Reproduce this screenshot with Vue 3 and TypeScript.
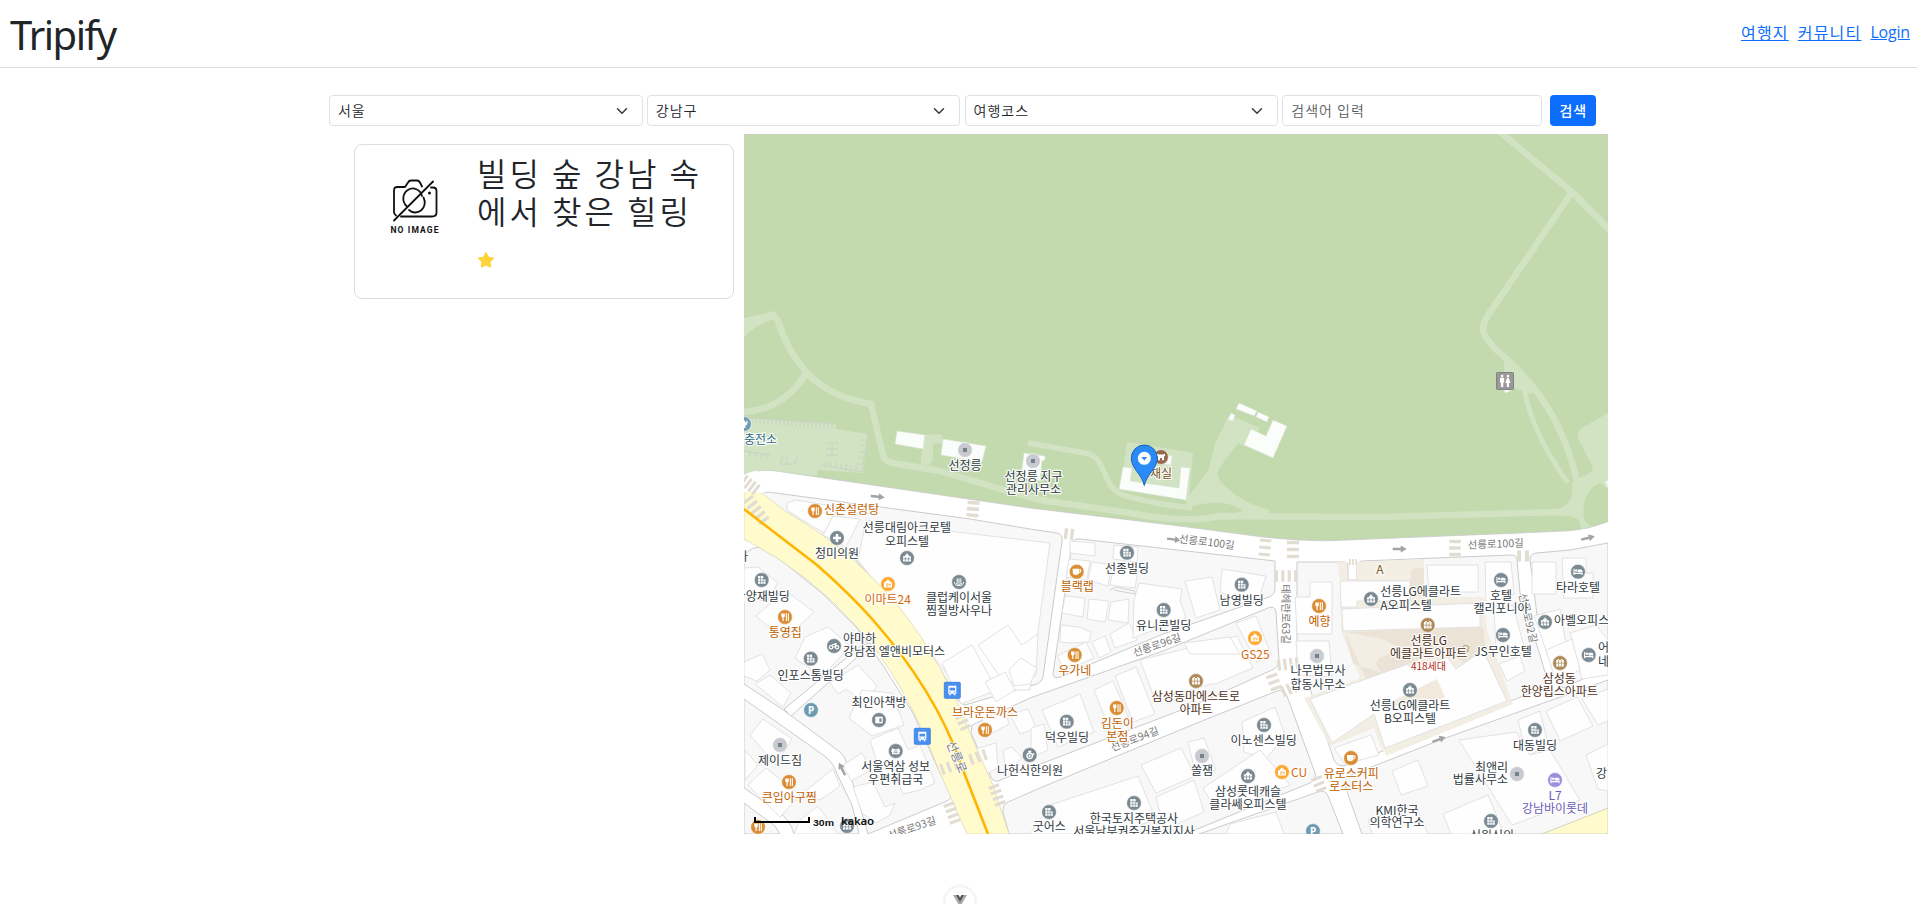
<script setup lang="ts">
import { ref } from 'vue'

type Kind =
  | 'building' | 'food' | 'cafe' | 'store' | 'apt' | 'office' | 'hotel' | 'stay'
  | 'dot' | 'parking' | 'plus' | 'spa' | 'bike' | 'book' | 'post' | 'clinic' | 'charge' | 'heritage'

interface Poi { k: Kind; x: number; y: number }
interface Label { t: string; x: number; y: number; c?: string; a?: 'start' | 'middle' | 'end' }
interface Walk { x: number; y: number; r: number; n: number; w: number; h: number; p: number }

const region = ref('서울')
const district = ref('강남구')
const category = ref('여행코스')
const keyword = ref('')

const iconFill: Record<Kind, string> = {
  building: '#7b8a92', food: '#db8d35', cafe: '#db8d35', store: '#fba834', apt: '#ae8a58', office: '#7b8a92',
  hotel: '#7b8a92', stay: '#9a8fdb', dot: '#c8cad0', parking: '#6f9bb1', plus: '#7b8a92', spa: '#7b8a92',
  bike: '#7b8a92', book: '#7b8a92', post: '#7b8a92', clinic: '#7b8a92', charge: '#6f9bb1', heritage: '#97694a',
}

const pois: Poi[] = [
  { k: 'charge', x: 744, y: 424 }, { k: 'dot', x: 965, y: 450 }, { k: 'dot', x: 1033, y: 461 },
  { k: 'heritage', x: 1161, y: 457 }, { k: 'food', x: 815, y: 511 }, { k: 'office', x: 907, y: 558 },
  { k: 'plus', x: 837, y: 538 }, { k: 'store', x: 888, y: 584 }, { k: 'spa', x: 959, y: 582 },
  { k: 'building', x: 761.7, y: 580 }, { k: 'food', x: 785, y: 617 }, { k: 'bike', x: 834, y: 646 },
  { k: 'building', x: 810.7, y: 658.7 }, { k: 'parking', x: 811, y: 710 }, { k: 'book', x: 879, y: 720 },
  { k: 'post', x: 895.7, y: 751 }, { k: 'food', x: 985, y: 730 }, { k: 'dot', x: 780, y: 745 },
  { k: 'food', x: 789, y: 782 }, { k: 'food', x: 758, y: 827 }, { k: 'office', x: 847, y: 826 },
  { k: 'clinic', x: 1029.7, y: 755 }, { k: 'cafe', x: 1076.7, y: 571.7 }, { k: 'building', x: 1127, y: 552.7 },
  { k: 'building', x: 1163.7, y: 610 }, { k: 'building', x: 1241.7, y: 584.7 }, { k: 'food', x: 1074.7, y: 655 },
  { k: 'store', x: 1255, y: 638 }, { k: 'food', x: 1319, y: 606 }, { k: 'dot', x: 1317, y: 656 },
  { k: 'office', x: 1371, y: 599 }, { k: 'apt', x: 1427.7, y: 625 }, { k: 'hotel', x: 1501, y: 580 },
  { k: 'hotel', x: 1503, y: 635 }, { k: 'hotel', x: 1578, y: 571.7 }, { k: 'office', x: 1545, y: 622 },
  { k: 'hotel', x: 1588.7, y: 655 }, { k: 'apt', x: 1560, y: 663 }, { k: 'apt', x: 1196, y: 681 },
  { k: 'food', x: 1116.7, y: 708 }, { k: 'building', x: 1066.7, y: 721.7 }, { k: 'building', x: 1264, y: 725 },
  { k: 'dot', x: 1202, y: 756 }, { k: 'store', x: 1282, y: 772 }, { k: 'office', x: 1248, y: 776 },
  { k: 'building', x: 1134, y: 803 }, { k: 'building', x: 1049, y: 812 }, { k: 'parking', x: 1313, y: 831 },
  { k: 'office', x: 1410, y: 690 }, { k: 'building', x: 1535, y: 730 }, { k: 'cafe', x: 1351, y: 758 },
  { k: 'dot', x: 1517, y: 774 }, { k: 'stay', x: 1555, y: 780 }, { k: 'building', x: 1491, y: 821 },
]

const labels: Label[] = [
  { t: '충전소', x: 744, y: 440, a: 'start', c: 'teal' },
  { t: '선정릉', x: 965, y: 465.7 },
  { t: '선정릉 지구', x: 1033.5, y: 477 }, { t: '관리사무소', x: 1033.5, y: 490 },
  { t: '재실', x: 1161, y: 473.5, c: 'bronze' },
  { t: '신촌설렁탕', x: 824, y: 510, a: 'start', c: 'orange' },
  { t: '선릉대림아크로텔', x: 907, y: 528 }, { t: '오피스텔', x: 907, y: 541.7 },
  { t: '청미의원', x: 837, y: 554 },
  { t: '이마트24', x: 887.7, y: 600, c: 'tangerine' },
  { t: '클럽케이서울', x: 959, y: 598 }, { t: '찜질방사우나', x: 959, y: 611 },
  { t: '사', x: 748, y: 557, a: 'end' },
  { t: '한양재빌딩', x: 789.8, y: 596.3, a: 'end' },
  { t: '통영집', x: 785.3, y: 633, c: 'orange' },
  { t: '야마하', x: 843, y: 639, a: 'start' }, { t: '강남점 엘앤비모터스', x: 843, y: 652, a: 'start' },
  { t: '인포스톰빌딩', x: 810.7, y: 675.3 },
  { t: '최인아책방', x: 879, y: 703 },
  { t: '서울역삼 성보', x: 895.7, y: 767 }, { t: '우편취급국', x: 895.7, y: 780 },
  { t: '브라운돈까스', x: 985, y: 712.7, c: 'orange' },
  { t: '제이드짐', x: 780, y: 761 },
  { t: '큰입아구찜', x: 789.3, y: 798, c: 'orange' },
  { t: '나헌식한의원', x: 1030, y: 771 },
  { t: '블랙랩', x: 1077.3, y: 587, c: 'orange' },
  { t: '선종빌딩', x: 1127, y: 569 },
  { t: '유니콘빌딩', x: 1163.7, y: 626 },
  { t: '남영빌딩', x: 1241.7, y: 601 },
  { t: '우가네', x: 1074.7, y: 671, c: 'orange' },
  { t: 'GS25', x: 1255.3, y: 654.7, c: 'tangerine' },
  { t: '예향', x: 1319.5, y: 622, c: 'orange' },
  { t: '나무법무사', x: 1318, y: 671 }, { t: '합동사무소', x: 1318, y: 684.5 },
  { t: 'A', x: 1380, y: 569.7, c: 'bronze' },
  { t: '선릉LG에클라트', x: 1380.3, y: 592, a: 'start' }, { t: 'A오피스텔', x: 1380.3, y: 605.3, a: 'start' },
  { t: '선릉LG', x: 1428.7, y: 641, c: 'brown' }, { t: '에클라트아파트', x: 1428.7, y: 653.7, c: 'brown' },
  { t: '418세대', x: 1428.5, y: 665.3, c: 'red' },
  { t: '호텔', x: 1501, y: 596 }, { t: '캘리포니아', x: 1501, y: 609 },
  { t: 'JS무인호텔', x: 1503, y: 651.3 },
  { t: '타라호텔', x: 1578, y: 587.3 },
  { t: '아벨오피스텔', x: 1554, y: 620.7, a: 'start' },
  { t: '어반', x: 1598, y: 647.7, a: 'start' }, { t: '네스', x: 1598, y: 661.7, a: 'start' },
  { t: '삼성동', x: 1559.3, y: 679, c: 'brown' }, { t: '한양립스아파트', x: 1559.3, y: 692, c: 'brown' },
  { t: '삼성동마에스트로', x: 1196, y: 696.7, c: 'brown' }, { t: '아파트', x: 1196, y: 709.7, c: 'brown' },
  { t: '덕우빌딩', x: 1067, y: 738 },
  { t: '이노센스빌딩', x: 1263.7, y: 741 },
  { t: '쏠잼', x: 1202, y: 771 },
  { t: 'CU', x: 1291, y: 772.3, a: 'start', c: 'tangerine' },
  { t: '삼성롯데캐슬', x: 1248, y: 792 }, { t: '클라쎄오피스텔', x: 1248, y: 805 },
  { t: '한국토지주택공사', x: 1134, y: 819 }, { t: '서울남부권주거복지지사', x: 1134, y: 832 },
  { t: '굿어스', x: 1049.3, y: 827 },
  { t: '선릉LG에클라트', x: 1410, y: 706 }, { t: 'B오피스텔', x: 1410, y: 719 },
  { t: '대동빌딩', x: 1535, y: 746 },
  { t: '유로스커피', x: 1351.3, y: 774, c: 'orange' }, { t: '로스터스', x: 1351.3, y: 787, c: 'orange' },
  { t: '최앤리', x: 1508, y: 767.3, a: 'end' }, { t: '법률사무소', x: 1508, y: 780, a: 'end' },
  { t: 'L7', x: 1555, y: 795.3, c: 'purple' }, { t: '강남바이롯데', x: 1555, y: 809, c: 'purple' },
  { t: 'KMI한국', x: 1397, y: 810.3 }, { t: '의학연구소', x: 1397, y: 822.3 },
  { t: '신원신의', x: 1492, y: 836 },
  { t: '강남', x: 1596, y: 774, a: 'start' },
]

const roadNames = [
  { t: '선릉로100길', x: 1206.7, y: 542, r: 7 }, { t: '선릉로100길', x: 1495.7, y: 544, r: -2 },
  { t: '선릉로96길', x: 1157, y: 645, r: -19 }, { t: '선릉로94길', x: 1134.7, y: 739, r: -21 },
  { t: '테헤란로63길', x: 1286, y: 614, r: 90 }, { t: '선릉로92길', x: 1528, y: 618, r: 77 },
  { t: '선릉로93길', x: 912, y: 828, r: -19 },
]

const frontNames: Label[] = [
  { t: '김돈이', x: 1117.3, y: 724, c: 'orange' }, { t: '본점', x: 1117.3, y: 737, c: 'orange' },
]

const arrows = [
  { x: 877.7, y: 496.7, r: 6 }, { x: 1174, y: 539.5, r: 7 }, { x: 1399.7, y: 549, r: 0 },
  { x: 1588, y: 538, r: -14 }, { x: 1439, y: 739.5, r: -20 }, { x: 842, y: 769, r: -117 },
]

const walks: Walk[] = [
  { x: 973, y: 509, r: 5, n: 3, w: 12, h: 3.4, p: 6.3 },
  { x: 1069, y: 534, r: 97, n: 2, w: 11, h: 3.4, p: 6 },
  { x: 1265, y: 547.5, r: 5, n: 3, w: 11.5, h: 3.2, p: 7 },
  { x: 1293, y: 549.5, r: 0, n: 3, w: 12, h: 3.4, p: 7 },
  { x: 1286, y: 576, r: 90, n: 4, w: 11.5, h: 3.2, p: 6.4 },
  { x: 1288, y: 664, r: 83, n: 4, w: 11, h: 3.2, p: 6 },
  { x: 1274, y: 682, r: -20, n: 3, w: 11.5, h: 3.2, p: 6.5 },
  { x: 1289, y: 689, r: 65, n: 3, w: 11, h: 3.2, p: 6 },
  { x: 1319, y: 784, r: -22, n: 3, w: 11, h: 3, p: 6 },
  { x: 1353, y: 562, r: 90, n: 3, w: 6, h: 1.8, p: 3.2 },
  { x: 1455, y: 548, r: 0, n: 3, w: 11.5, h: 3.4, p: 6.5 },
  { x: 1523, y: 556, r: 90, n: 2, w: 11, h: 4, p: 8 },
  { x: 963, y: 722, r: -25, n: 3, w: 11, h: 3.2, p: 6 },
  { x: 997, y: 795, r: -20, n: 4, w: 11, h: 3.2, p: 6 },
  { x: 952, y: 813, r: -20, n: 4, w: 11, h: 3.2, p: 6 },
  { x: 750, y: 485, r: -52, n: 4, w: 12, h: 3, p: 5 },
  { x: 756, y: 510, r: -37, n: 5, w: 12, h: 3.4, p: 6.5 },
  { x: 949, y: 767, r: 70, n: 3, w: 11, h: 3.2, p: 7 },
  { x: 978, y: 757, r: 70, n: 3, w: 11, h: 3.2, p: 7 },
]

const blocks = [
  'M757 493Q770 491 783 494L970 519L1030 529L1057 533Q1063 534 1062 541L1043 677Q1042 682 1037 684L965 705Q958 704 953 691L937 664L900 610L853 557L785 512Z',
  'M744 556Q752 545 762 548L782 561L823 594L857 628L884 667L913 713L940 773L951 792Q953 798 947 801L868 834L858 800L847 765Q845 756 840 752L782 709L744 684Z',
  'M744 699L826 757Q834 764 837 774L852 805L859 834H794Q790 820 779 812L744 788Z',
  'M744 803L775 826L780 834H744Z',
  'M972 725L1030 698L1163 651L1268 608Q1275 605 1276 612L1279 660Q1279 667 1272 670L1197 704L1030 768L998 781Q992 782 990 775L971 733Z',
  'M1008 802L1040 788L1197 723L1277 691Q1284 689 1287 696L1315 773Q1317 779 1310 783L1185 834H1009L1003 812Q1002 805 1008 802Z',
  'M1199 834L1318 792Q1325 789 1328 796L1343 834Z',
  'M1080 539Q1073 538 1072 544L1053 674Q1053 679 1060 677L1163 634L1269 597Q1275 595 1275 588V561Z',
  'M1297 562H1345Q1348 562 1348 566V580H1357V566Q1357 562 1362 561L1511 555Q1517 555 1517 560L1520 593L1540 655L1549 686L1347 765Q1338 768 1334 760L1297 650Z',
  'M1530 560Q1530 553 1537 553L1570 550L1608 543V667L1566 687Q1561 689 1559 683L1537 615Z',
  'M1346 777L1440 740L1608 680V834H1362L1345 786Z',
]

const beige = [
  'M1337 562H1347V580H1357V562L1424 559V597L1484 597L1488 640L1513 704L1386 756L1375 722L1397 690L1361 681L1341 631L1340 580Z',
  'M1304 698L1358 679L1488 633L1512 703L1383 752L1374 728L1330 746Z',
]
const tan = ['M1411 574Q1411 567 1420 568H1424V596H1409Z', 'M1345 632L1353 664L1404 679L1368 683Z', 'M1381 672Q1370 660 1385 656L1400 648L1382 639L1345 632L1483 627L1486 652L1468 664L1440 650L1392 671Z', 'M1387 704L1437 679L1445 697L1415 709Z']

const buildings = [
  // northwest block
  'M787 510V503L796 500L838 507L824 533L801 519Z', 'M833 516L860 519L846 547L823 535Z', 'M866 520L905 526L1050 543L1030 690L960 690L905 620L858 560Z',
  'M942 663L972 645L997 690L961 704Z', 'M978 645L1008 625L1022 645L1038 634L1036 675L1005 684Z',
  'M1009 670L1021 658L1037 668L1030 684L1014 686Z',
  // west
  'M744 568L758 567L778 583L766 602L744 594Z', 'M756 616L785 590L814 612L784 640Z', 'M805 637L828 627L850 646L822 677L795 658Z',
  'M755 684L770 675L791 693L783 707Z', 'M744 676V662L762 654L770 670L757 681Z', 'M858 665L877 686L866 704L846 689L838 694L830 683Z',
  'M862 690L892 693L904 725L872 736L849 718Z', 'M870 740L898 728L908 750L920 745L935 783L920 790L903 794L897 780L884 785Z',
  'M843 765L862 753L871 770L851 781Z', 'M853 787L873 782L885 807L895 803L890 815L876 823L862 813Z',
  'M750 735L763 719L792 739L776 765Z', 'M745 750L758 765L745 780Z', 'M748 785L766 768L800 795L780 817Z', 'M803 793L833 769L840 786L820 800Z', 'M800 820L818 806L838 834H794Z',
  // between the narrow streets
  'M1070 541L1095 543V556L1070 553Z', 'M1114 545L1138 547L1137 562L1113 559Z', 'M1069 559L1090 561L1087 580L1066 577Z', 'M1092 562L1112 565L1108 586L1088 580Z', 'M1114 567L1138 570L1135 588L1110 585Z',
  'M1065 596L1085 598L1083 617L1062 613Z', 'M1089 599L1109 601L1105 622L1087 619Z', 'M1111 602L1129 599L1128 623L1108 620Z', 'M1061 625L1079 627L1091 632L1089 642L1070 643L1060 642Z',
  'M1057 656L1086 642L1094 658L1065 671Z', 'M1092 642L1105 636L1111 652L1099 658Z', 'M1110 634L1129 623L1137 640L1115 648Z',
  'M1139 583L1182 589L1180 600L1186 618L1133 638L1134 600Z', 'M1185 581L1212 577L1220 610L1196 618Z', 'M1222 569L1266 576L1260 595L1246 605L1220 592Z',
  // middle band
  'M1094 690L1113 681L1131 723L1110 730Z', 'M1115 676L1136 667L1155 714L1133 722Z', 'M1140 660L1237 636L1253 668L1215 684L1211 684L1155 700Z',
  'M1184 643L1230 637L1240 654L1190 654Z', 'M1042 710L1080 694L1094 732L1058 747Z', 'M985 682L1005 672L1015 690L996 702Z',
  'M1236 623L1256 616L1271 655L1257 662Z', 'M982 719L1005 710L1009 724L989 735Z', 'M1010 714L1028 709L1036 728L1020 734Z', 'M975 749L996 743L998 768L986 774Z', 'M1003 750L1012 747L1022 758L1006 772Z',
  'M1031 728L1044 724L1048 750L1031 758Z',
  // below the middle band
  'M1141 765L1181 748L1195 776L1156 793Z', 'M1188 742L1204 738L1216 770L1195 771Z', 'M1156 797L1194 780L1204 812L1164 830Z', 'M1050 805L1138 776L1156 820L1110 834H1030Z',
  'M1242 722L1275 707L1285 735L1266 759L1244 752Z', 'M1203 788L1260 750L1290 785L1250 800L1216 810Z', 'M1230 824L1276 812L1284 834H1226Z',
  // east
  'M1295 597L1310 597V582H1332V634H1297Z', 'M1296 641L1329 641L1332 677L1298 675Z', 'M1427 565H1478V592H1429Z', 'M1485 562H1511L1514 594L1486 604Z',
  'M1340 581H1410V601H1357V607H1341Z', 'M1342 609L1480 603V627L1343 631Z', 'M1494 608L1513 605L1526 654L1496 650Z', 'M1499 664L1520 656L1525 671L1507 681Z',
  'M1310 699L1408 664L1413 671L1447 657L1456 669L1483 650L1507 701L1385 748L1374 714L1332 743Z', 'M1334 748L1371 735L1379 755L1345 764Z', 'M1532 562H1556V594H1532Z', 'M1562 558H1586V573H1593V598H1564Z',
  'M1534 616L1560 609L1567 650L1548 656Z', 'M1570 633L1596 625L1608 640V675L1582 679Z', 'M1546 650L1572 639L1580 670L1556 682Z', 'M1518 720L1540 711L1548 744L1527 757Z', 'M1546 711L1577 697L1593 726L1560 741Z',
  'M1582 699L1608 689V721L1598 725Z', 'M1586 755L1608 744V791L1598 789Z', 'M1459 740L1516 732L1530 755L1550 750L1580 800L1512 825Z', 'M1392 771L1418 760L1428 786L1401 795Z', 'M1368 820L1415 804L1428 834H1372Z', 'M1443 814L1488 795L1504 834H1451Z',
]
</script>

<template>
  <div class="page">
    <header class="topbar">
      <h1 class="brand">Tripify</h1>
      <nav class="links">
        <a href="#" class="ko">여행지</a>
        <a href="#" class="ko">커뮤니티</a>
        <a href="#" class="en">Login</a>
      </nav>
    </header>

    <main class="content">
      <form class="filters" @submit.prevent>
        <div v-for="(v, i) in [region, district, category]" :key="i" class="select ko">
          <span>{{ v }}</span>
          <svg viewBox="0 0 16 16" width="12" height="12"><path d="m2 5 6 6 6-6" fill="none" stroke="#343a40" stroke-width="2" stroke-linecap="round" stroke-linejoin="round" /></svg>
        </div>
        <input v-model="keyword" class="search ko" placeholder="검색어 입력" />
        <button class="submit ko">검색</button>
      </form>

      <div class="columns">
        <aside class="list">
          <article class="card">
            <svg class="thumb" viewBox="0 0 50 56" width="50" height="56">
              <g fill="none" stroke="#111" stroke-width="1.800" stroke-linecap="round" stroke-linejoin="round">
                <path d="M33 7.5 L31 3.5 Q30 1.5 28 1.5 H22 Q20 1.5 19 3.5 L16 8 H8.500 Q5 8 5 11.500 V33 Q5 35 7 36.500 M12 37.500 H43 Q47.500 37.500 47.500 33.500 V12 Q47.500 8.500 44 8.500 H42" />
                <path d="M33 17 A9.500 10 0 1 0 17.500 27 M20 31 A9.500 10 0 0 0 34.500 18.500" />
                <path d="M5 41.500 L44 2.500" />
              </g>
              <circle cx="40.500" cy="14" r="1.500" fill="#111" />
              <text x="1.500" y="54" textLength="48" class="noimg">NO IMAGE</text>
            </svg>
            <div class="info">
              <h2 class="title">빌딩 숲 강남 속<br />에서 찾은 힐링</h2>
              <svg class="star" viewBox="0 0 16 16" width="16" height="16"><path d="M8 .8 10.300 5.300 15.300 6.200 11.900 9.900 12.500 14.900 8 12.800 3.500 14.900 4.100 9.900 .7 6.200 5.700 5.300Z" fill="#fdd43a" stroke="#fdd43a" stroke-width="1.400" stroke-linejoin="round" /></svg>
            </div>
          </article>
        </aside>

        <svg class="map" viewBox="744 134 864 700" width="864" height="700">
          <rect x="744" y="134" width="864" height="700" fill="#fff" />

          <!-- park -->
          <path d="M744 134H1608V521.700Q1590 529 1570 530.700L1520 533L1420 537L1330 540.700Q1300 541 1263 537L1180 526L1030 508L783 472Q765 469 757 471L744 475Z" fill="#c3daaf" stroke="#c9c9c9" stroke-width=".8" />
          <g fill="none" stroke="#d1e3c3" stroke-width="6.500" stroke-linejoin="round">
            <path d="M777 318Q787 351 807 373Q829 397 871 404L883 455Q884 461 892 463L940 471L1000 489L1040 500L1130 513Q1185 524 1220 516Q1300 517 1380 517L1562 512" />
            <path d="M744 412Q785 409 806 373" />
            <path d="M1028 443L1085 453C1110 457 1098 491 1130 497Q1160 505 1192 508" stroke-width="5.500" />
            <path d="M925 465L928 439H942M928 462L929 441" stroke-width="9" />
            <path d="M1499 131L1572 192L1612 232" />
            <path d="M1572 192L1493 308C1477 329 1480 335 1503 356Q1530 379 1548 408Q1570 446 1577 482" />
            <path d="M1524 386Q1530 430 1568 483" stroke-width="5" />
          </g>
          <g fill="#d1e3c3">
            <path d="M744 318L775 311L779 318Q758 323 744 337Z" />
            <path d="M744 418L836 423V429L868 434L863 473L818 470L817 476L783 472Q765 469 757 471L744 475Z" />
            <path d="M1127 442L1193 453L1189 500L1120 490Z" />
            <path d="M1229 415L1260 428L1247 447L1238 443L1220 467Q1212 478 1232 492Q1248 505 1270 510L1265 518L1205 520L1243 511Q1225 497 1190 507L1185 501L1208 471L1215 444Z" />
            <path d="M1504 356L1538 389L1531 394L1522 391Q1507 387 1504 374Z" />
            <path d="M1608 413L1582 428Q1575 433 1579 440L1592 465Q1595 472 1585 475L1572 482Q1575 506 1556 509L1558 516Q1572 515 1579 520L1581 529L1592 527Q1577 493 1600 483L1608 489Z" />
          </g>
          <path d="M1608 489Q1580 484 1584 520L1590 526L1608 518Z" fill="#c3daaf" />
          <g stroke="#c5cec0" stroke-width=".8" fill="none">
            <path d="M744 417L836 424M748 418V423M752 418V423M756 418V423M760 419V424M764 419V424M768 419V424M772 420V425M776 420V425M780 420V425M784 421V426M788 421V426M792 421V426M796 422V427M800 422V427M804 422V427M808 423V428M812 423V428M816 423V428M820 424V429M824 424V429M828 424V429M832 424V429" />
            <path d="M868 434L862 472L820 465M866 440H861M865 446H860M864 452H859M864 458H858M863 464H857M826 461V466M831 462V467M836 462V468M841 463V469M846 464V470M851 465V471M856 466V472M826 443H838M826 449H838M826 455H838M832 443V455" />
            <path d="M744 451L770 455M750 452L749 457M756 453L755 458M762 454L761 459M768 454L767 459M783 456L780 464H795L797 457M788 457L786 464" />
          </g>
          <g fill="#fbfdfb" stroke="#d9e2d2" stroke-width=".6">
            <path d="M897 431L925 435L923 449L895 444Z" /><path d="M943 439L986 446L982 462L941 455Z" />
            <path d="M1024 453L1045 456V460L1042 461L1040 481L1021 477Z" />
            <path d="M1123 467L1132 468L1130 481L1179 488L1181 467L1190 468L1186 500L1119 489Z" /><path d="M1153 453L1172 456L1171 465L1152 463Z" />
            <path d="M1239 403L1257 411L1254 416L1236 409Z" /><path d="M1258 412L1269 417L1267 422L1256 417Z" /><path d="M1231 413L1235 415L1233 421L1228 420Z" />
            <path d="M1273 420L1287 426L1273 458L1244 445L1251 429L1266 436Z" /><path d="M1503 390L1512 390L1506 393Z" /><path d="M1605 482L1608 480V488Z" />
          </g>

          <!-- blocks, apartment grounds and buildings -->
          <g fill="#f8f8f9" stroke="#cbcbcb" stroke-width="1"><path v-for="(d, i) in blocks" :key="i" :d="d" /></g>
          <g fill="#f3eee3"><path v-for="(d, i) in beige" :key="i" :d="d" /></g>
          <g fill="#ebe3d6"><path v-for="(d, i) in tan.slice(0, 3)" :key="i" :d="d" /></g>
          <g fill="#fefefe" stroke="#dfdfe0" stroke-width=".9"><path v-for="(d, i) in buildings" :key="i" :d="d" /></g>
          <path :d="tan[3]" fill="#f0e9dc" />
          <path d="M784 709L862 645L873 643L791 716Z" fill="#fff" stroke="#cbcbcb" />
          <path d="M1110 590L1116 587L1135 591V594L1114 590" fill="none" stroke="#d0d0d0" />

          <!-- main avenue -->
          <path d="M744 488L762 493L785 511Q850 548 900 608Q945 665 973 740L992 783L1009 834H967L940 773Q905 680 857 627Q810 573 744 539Z" fill="#fffbcd" stroke="#ddd9bb" stroke-width=".8" />
          <path d="M744 475Q752 471 757 471L765 493L744 492Z" fill="#fff" />
          <path d="M1542 834L1608 808V834Z" fill="#fffbcd" stroke="#d5d2bb" />
          <g v-for="(c, i) in walks" :key="'w' + i" :transform="`translate(${c.x} ${c.y}) rotate(${c.r})`" fill="#e2ddd3">
            <rect v-for="n in c.n" :key="n" :x="-c.w / 2" :y="(n - (c.n + 1) / 2) * c.p - c.h / 2" :width="c.w" :height="c.h" />
          </g>
          <path d="M744 509L817 565Q850 594 873 620Q938 694 963 770L988 834" fill="none" stroke="#ffb400" stroke-width="2.600" />

          <g v-for="(a, i) in arrows" :key="'a' + i" :transform="`translate(${a.x} ${a.y}) rotate(${a.r})`"><path d="M-7 -1.200H1V-3.500L7 0L1 3.500V1.200H-7Z" fill="#a3a3a3" /></g>
          <text v-for="(r, i) in roadNames" :key="'r' + i" class="road" :transform="`translate(${r.x} ${r.y}) rotate(${r.r})`" y="3.700">{{ r.t }}</text>
          <text class="road avenue" transform="translate(956.500 757) rotate(67)" y="4">선릉로</text>

          <!-- points of interest -->
          <g v-for="(p, i) in pois" :key="'p' + i" :transform="`translate(${p.x} ${p.y})`">
            <circle r="7.400" :fill="iconFill[p.k]" stroke="#fff" stroke-opacity=".75" stroke-width=".8" />
            <rect v-if="p.k === 'dot'" x="-2" y="-2" width="4" height="4" fill="#73848c" />
            <g v-else-if="p.k === 'food'" fill="#fff"><path d="M-3.700 -3.500H-.2V-1Q-.2 .3 -1.300 .6V4H-2.500V.6Q-3.700 .3 -3.700 -1Z" /><path d="M.8 -3.800H1.900V4H.8ZM2.800 -3.800H3.900V4H2.800Z" /></g>
            <g v-else-if="p.k === 'cafe'"><path d="M-4 -3H2.500V0Q2.500 3.200 -.8 3.200Q-4 3.200 -4 0Z" fill="#fff" /><path d="M2.500 -2H3.800Q4.500 .5 2 1" fill="none" stroke="#fff" stroke-width="1.100" /></g>
            <g v-else-if="p.k === 'building'"><path d="M-3.700 -4H1.500V-.5H3.800V3.800H-3.700Z" fill="#fff" /><path d="M-1.200 -4V3.800M1.300 -1V3.800M-3.700 -1.300H1.500M-3.700 1.400H3.800" stroke="#7b8a92" stroke-width=".6" /></g>
            <g v-else-if="p.k === 'office'"><path d="M-4 -1.500L-1.800 -2V-3.300H-.6V-4.500H.6V-3.300H1.800V-2L4 -1.500V3.500H-4Z" fill="#fff" /><path d="M-1.600 -1V3.500M1.600 -1V3.500M-4 .9H4" stroke="#7b8a92" stroke-width=".7" /></g>
            <g v-else-if="p.k === 'apt'"><path d="M-3.800 -3H-2.500V-4H-1V-3H1V-4H2.500V-3H3.800V3.500H-3.800Z" fill="#fff" /><path d="M-1.400 -3V3.500M1.400 -3V3.500M-3.800 .2H3.800" stroke="#ae8a58" stroke-width=".7" /></g>
            <g v-else-if="p.k === 'hotel' || p.k === 'stay'" fill="#fff"><path d="M-4.600 -3H-3.500V1H4.600V3.300H3.600V2.300H-3.500V3.300H-4.600Z" /><circle cx="-1.900" cy="-1.200" r="1.200" /><path d="M-.3 -2.300H3Q4.600 -2.300 4.600 -.6V.5H-.3Z" /></g>
            <g v-else-if="p.k === 'store'"><path d="M-4 -1.500L-2 -2.300V-3.300H-.8V-4.300H.8V-3.300H2V-2.300L4 -1.500V3.600H-4Z" fill="#fff" /><path d="M-1.600 -.3H-.3V1H-1.600V2.200H-.2M.8 -.3V1H2.200M2.200 -.3V2.400" fill="none" stroke="#fba834" stroke-width=".7" /></g>
            <path v-else-if="p.k === 'plus'" d="M-1.300 -4H1.300V-1.300H4V1.300H1.300V4H-1.300V1.300H-4V-1.300H-1.300Z" fill="#fff" />
            <path v-else-if="p.k === 'spa'" d="M-4.600 0Q-4.500 3.600 0 3.600Q4.500 3.600 4.600 0M-3 1.500Q0 3 3 1.500M-1.800 -3.700V.7M0 -3.700V1M1.800 -3.700V.7" fill="none" stroke="#fff" stroke-width="1" />
            <g v-else-if="p.k === 'bike'" fill="none" stroke="#fff" stroke-width="1.100"><circle cx="-3" cy="1.200" r="1.700" /><circle cx="3" cy="1.200" r="1.700" /><path d="M-3 0L-1 -1.500H1.500L3 1M-1 1H1L2 -2.500H.5" /></g>
            <g v-else-if="p.k === 'book'"><path d="M-3.700 -3.300H3.700V3.300H-3.700Z" fill="#fff" /><path d="M.4 -1.800H2.400V2H.4Z" fill="#7b8a92" /></g>
            <g v-else-if="p.k === 'post'" fill="#fff"><path d="M-3.700 -2.800L0 -1.400L3.700 -2.800V-1.300L4.700 0L3.700 1.200V3.200H-3.700V1.200L-4.700 0L-3.700 -1.300Z" /><path d="M-2 0H2M-2 1.500H2" stroke="#7b8a92" stroke-width=".7" /></g>
            <g v-else-if="p.k === 'clinic'" fill="none" stroke="#fff" stroke-width="1.400"><circle cx="0" cy=".8" r="2.800" /><path d="M-1.600 -3.600H1.600M0 -3.600V-2M2.800 0L4.600 -1.400" /><circle cx="0" cy=".8" r=".5" /></g>
            <path v-else-if="p.k === 'heritage'" d="M-4 -3.300L-2 -2.500H2L4 -3.300V-1L3 -.5V3.300H1V1H-1V3.300H-3V-.5L-4 -1Z" fill="#fff" />
            <path v-else-if="p.k === 'charge'" d="M0 -3.500H1V-2H2.500V-3.500H3.500V-1Q3.500 1 1.500 1.500V4H0Z" fill="#fff" />
            <text v-else class="pk" y="3.600">P</text>
          </g>

          <g v-for="(b, i) in [[952.3, 690.3], [922.3, 736.3]]" :key="'b' + i" :transform="`translate(${b[0]} ${b[1]})`">
            <rect x="-8" y="-8" width="16" height="16" rx="1" fill="#4a90ef" stroke="#2f78dc" stroke-width=".8" />
            <path d="M-4 -4.500H4V3.500H3V5H1.500V3.500H-1.500V5H-3V3.500H-4Z" fill="#fff" /><path d="M-2.800 -2.500H2.800V.3H-2.800ZM-3 1.500H-1.600V2.400H-3ZM1.600 1.500H3V2.400H1.600Z" fill="#4a90ef" />
          </g>
          <g transform="translate(1505 381)">
            <rect x="-8.500" y="-8.500" width="17" height="17" rx=".8" fill="#999" stroke="#828282" />
            <g fill="#fff"><circle cx="-2.900" cy="-5" r="1.300" /><circle cx="2.900" cy="-5" r="1.300" /><path d="M-5 -3.300H-.8V1.500H-1.700V6H-4.100V1.500H-5Z" /><path d="M2 -3.300H3.800L5.500 2H4V6H1.800V2H.3Z" /></g>
          </g>
          <path d="M1463 647Q1464 644 1467 646Q1470 646 1468 649Q1469 652 1466 652M1463 647L1467 650" fill="none" stroke="#b39468" />

          <text v-for="(l, i) in labels" :key="'l' + i" :x="l.x" :y="l.y + 4.400" :class="['lbl', l.c]" :text-anchor="l.a ?? 'middle'">{{ l.t }}</text>
          <text v-for="(l, i) in frontNames" :key="'f' + i" :x="l.x" :y="l.y + 4.400" :class="['lbl', l.c]" text-anchor="middle">{{ l.t }}</text>

          <!-- marker -->
          <path d="M1144.300 485.500C1142 474 1131.300 469 1131.300 458A13 13 0 0 1 1157.300 458C1157.300 469 1146.600 474 1144.300 485.500Z" fill="#2a8bf8" stroke="#1c62b9" />
          <circle cx="1144.300" cy="458.300" r="6.500" fill="#fff" /><path d="M1141.300 457H1147.300L1144.300 460.500Z" fill="#2a8bf8" />

          <!-- scale and copyright -->
          <path d="M755 817V822H809V817" fill="none" stroke="#000" stroke-width="2" />
          <text x="813" y="826" class="scale" textLength="21" lengthAdjust="spacingAndGlyphs">30m</text>
          <text x="841" y="825" class="kakao" textLength="33">kakao</text>
        </svg>
      </div>
    </main>

    <div class="devtools">
      <svg viewBox="0 0 14 12" width="14" height="12"><path d="M0 0H3.500L7 6L10.500 0H14L7 12Z" fill="#aaa" /><path d="M3 0H5.500L7 2.500L8.500 0H11L7 7Z" fill="#555" /></svg>
    </div>
  </div>
</template>

<style scoped>
.page { position: relative; height: 904px; overflow: hidden; background: #fff; color: #212529; font-family: "Open Sans", "Noto Sans CJK KR", sans-serif; }
.ko { font-family: "Noto Sans CJK KR", sans-serif; font-weight: 350; letter-spacing: 0.07em; }
.topbar { box-sizing: border-box; height: 68px; border-bottom: 1px solid #dcdddd; display: flex; justify-content: space-between; padding: 0 7px 0 10px; }
.brand { margin: 7px 0 0; font: 400 40px/56px "Noto Sans", sans-serif; letter-spacing: -1.5px; }
.links { display: flex; gap: 9px; margin-top: 20px; font-size: 16px; line-height: 24px; }
.links a { color: #0d6efd; text-decoration: underline; }
.links .ko { font-weight: 400; letter-spacing: 1.2px; }
.links .en { font-weight: 400; letter-spacing: -0.2px; }
.content { padding-left: 329px; }
.filters { display: flex; margin-top: 27px; height: 31px; }
.select, .search { box-sizing: border-box; height: 31px; border: 1px solid #dee2e6; border-radius: 4px; font-size: 14px; background: #fff; }
.select { width: 313.6px; margin-right: 4.2px; padding: 0 14px 0 8px; display: flex; align-items: center; justify-content: space-between; }
.select span { margin-top: -2px; }
.search { width: 260px; padding: 0 8px 2px; outline: none; color: #212529; }
.search::placeholder { color: #595c5f; opacity: 1; }
.submit { width: 46px; height: 31px; margin-left: 8px; padding: 0 0 2px; border: 0; border-radius: 4px; background: #0d6efd; color: #fff; font-size: 14px; font-weight: 500; }
.columns { display: flex; margin-top: 8px; }
.list { width: 415px; }
.card { box-sizing: border-box; width: 380px; height: 155px; margin: 10px 0 0 25px; border: 1px solid #dcddde; border-radius: 8px; display: flex; }
.thumb { margin: 34px 0 0 34px; }
.noimg { font: 700 8.500px Roboto, sans-serif; fill: #111; }
.info { margin: 8px 0 0 38px; }
.title { margin: 0; font: 350 32px/38.400px "Noto Sans CJK KR", sans-serif; letter-spacing: 3px; white-space: nowrap; }
.star { display: block; margin: 22px 0 0 1px; }
.map { display: block; overflow: hidden; }
.lbl { font: 400 12px "Noto Sans CJK KR", sans-serif; fill: #303a41; stroke: rgba(255, 255, 255, 0.9); stroke-width: 2.400px; paint-order: stroke; stroke-linejoin: round; }
.orange { fill: #c06000; }
.tangerine { fill: #d36a10; }
.brown { fill: #4c3020; }
.bronze { fill: #765428; }
.teal { fill: #2f6b88; }
.purple { fill: #6c5cba; }
.red { fill: #b02a1a; font-size: 10px; }
.road { font: 400 10.500px "Noto Sans CJK KR", sans-serif; fill: #777; text-anchor: middle; stroke: #fff; stroke-width: 1.500px; paint-order: stroke; }
.avenue { font-size: 12px; }
.pk { font: 700 10px "Noto Sans", sans-serif; fill: #fff; text-anchor: middle; }
.scale { font: 700 9.5px "Liberation Sans", sans-serif; fill: #111; stroke: #fff; stroke-width: 1.500px; paint-order: stroke; }
.kakao { font: 600 11.5px "Noto Sans", sans-serif; fill: #111; }
.devtools { position: absolute; left: 945px; top: 887px; width: 30px; height: 30px; border-radius: 50%; background: #fff; box-shadow: 0 0 4px rgba(0, 0, 0, 0.15); display: flex; justify-content: center; padding-top: 8px; box-sizing: border-box; }
</style>

<style>
html, body { margin: 0; overflow: hidden; }
</style>
